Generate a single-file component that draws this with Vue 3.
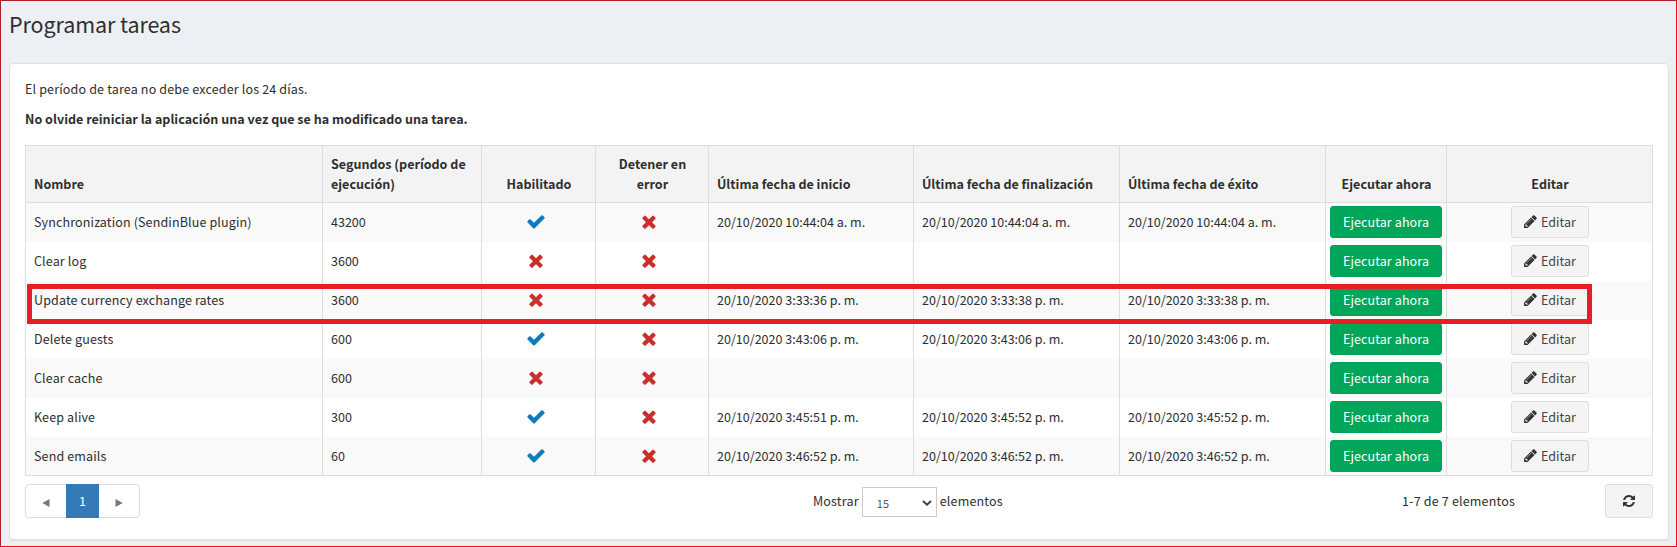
<script setup>
const tasks = [
  { name: 'Synchronization (SendinBlue plugin)', seconds: 43200, enabled: true, start: '20/10/2020 10:44:04 a. m.', end: '20/10/2020 10:44:04 a. m.' },
  { name: 'Clear log', seconds: 3600, enabled: false, start: '', end: '' },
  { name: 'Update currency exchange rates', seconds: 3600, enabled: false, start: '20/10/2020 3:33:36 p. m.', end: '20/10/2020 3:33:38 p. m.' },
  { name: 'Delete guests', seconds: 600, enabled: true, start: '20/10/2020 3:43:06 p. m.', end: '20/10/2020 3:43:06 p. m.' },
  { name: 'Clear cache', seconds: 600, enabled: false, start: '', end: '' },
  { name: 'Keep alive', seconds: 300, enabled: true, start: '20/10/2020 3:45:51 p. m.', end: '20/10/2020 3:45:52 p. m.' },
  { name: 'Send emails', seconds: 60, enabled: true, start: '20/10/2020 3:46:52 p. m.', end: '20/10/2020 3:46:52 p. m.' },
]
const checkPath = 'M1671 566q0 40-28 68l-724 724-136 136q-28 28-68 28t-68-28l-136-136-362-362q-28-28-28-68t28-68l136-136q28-28 68-28t68 28l294 295 656-657q28-28 68-28t68 28l136 136q28 28 28 68z'
const crossPath = 'M1490 1322q0 40-28 68l-136 136q-28 28-68 28t-68-28l-294-294-294 294q-28 28-68 28t-68-28l-136-136q-28-28-28-68t28-68l294-294-294-294q-28-28-28-68t28-68l136-136q28-28 68-28t68 28l294 294 294-294q28-28 68-28t68 28l136 136q28 28 28 68t-28 68l-294 294 294 294q28 28 28 68z'
</script>

<template>
  <div class="page">
    <h1>Programar tareas</h1>
    <section class="card">
      <p class="note">El período de tarea no debe exceder los 24 días.</p>
      <p class="note strong">No olvide reiniciar la aplicación una vez que se ha modificado una tarea.</p>
      <div class="grid">
        <table>
          <colgroup>
            <col class="c-name"><col class="c-sec"><col class="c-on"><col class="c-stop"><col class="c-start"><col class="c-date"><col class="c-date"><col class="c-run"><col class="c-edit">
          </colgroup>
          <thead>
            <tr>
              <th>Nombre</th>
              <th>Segundos (período de ejecución)</th>
              <th class="mid">Habilitado</th>
              <th class="mid">Detener en error</th>
              <th>Última fecha de inicio</th>
              <th>Última fecha de finalización</th>
              <th>Última fecha de éxito</th>
              <th class="mid">Ejecutar ahora</th>
              <th class="mid">Editar</th>
            </tr>
          </thead>
          <tbody>
            <tr v-for="t in tasks" :key="t.name">
              <td class="name">{{ t.name }}</td>
              <td>{{ t.seconds }}</td>
              <td class="mid">
                <svg class="mark" :class="t.enabled ? 'yes' : 'no'" viewBox="0 0 1792 1792"><path :d="t.enabled ? checkPath : crossPath" /></svg>
              </td>
              <td class="mid"><svg class="mark no" viewBox="0 0 1792 1792"><path :d="crossPath" /></svg></td>
              <td>{{ t.start }}</td>
              <td>{{ t.end }}</td>
              <td>{{ t.end }}</td>
              <td class="action"><button class="btn run">Ejecutar ahora</button></td>
              <td class="action">
                <button class="btn edit">
                  <svg class="pencil" viewBox="0 0 1792 1792"><path d="M491 1536l91-91-235-235-91 91v107h128v128h107zm523-928q0-22-22-22-10 0-17 7l-542 542q-7 7-7 17 0 22 22 22 10 0 17-7l542-542q7-7 7-17zm-54-192l416 416-832 832h-416v-416zm683 96q0 53-37 90l-166 166-416-416 166-165q36-38 90-38 53 0 91 38l235 234q37 39 37 91z" /></svg>
                  <span>Editar</span>
                </button>
              </td>
            </tr>
          </tbody>
        </table>
        <div class="highlight"></div>
      </div>
      <footer>
        <div class="pager">
          <span class="step"><svg viewBox="0 0 8 8"><path d="M7.5 0v8L.3 4z" /></svg></span>
          <span class="current">1</span>
          <span class="step"><svg viewBox="0 0 8 8"><path d="M.5 0v8L7.7 4z" /></svg></span>
        </div>
        <div class="length">
          <span>Mostrar</span>
          <div class="select">
            <span>15</span>
            <svg viewBox="0 0 10 6"><path d="M1 1l4 3.7L9 1" /></svg>
          </div>
          <span>elementos</span>
        </div>
        <div class="info">1-7 de 7 elementos</div>
        <button class="btn refresh">
          <svg viewBox="0 0 1792 1792"><path d="M1639 1056q0 5-1 7-64 268-268 434.500t-478 166.500q-146 0-282.500-55t-243.500-157l-129 129q-19 19-45 19t-45-19-19-45v-448q0-26 19-45t45-19h448q26 0 45 19t19 45-19 45l-137 137q71 66 161 102t187 36q134 0 250-65t186-179q11-17 53-117 8-23 30-23h192q13 0 22.500 9.500t9.500 22.500zm25-800v448q0 26-19 45t-45 19h-448q-26 0-45-19t-19-45 19-45l138-138q-148-137-349-137-134 0-250 65t-186 179q-11 17-53 117-8 23-30 23h-199q-13 0-22.500-9.500t-9.500-22.500v-7q65-268 270-434.500t480-166.500q146 0 284 55.500t245 156.500l130-129q19-19 45-19t45 19 19 45z" /></svg>
        </button>
      </footer>
    </section>
  </div>
</template>

<style>
body {
  margin: 0;
}
</style>

<style scoped>
.page {
  box-sizing: border-box;
  width: 1677px;
  height: 547px;
  padding: 0 8px 0 8px;
  border: 1px solid #e80c14;
  border-left-color: #a8222a;
  border-top-color: #a8222a;
  background: #ecf0f5;
  color: #2e2e2e;
  font: 12.54px/20px "Noto Sans CJK SC", "Source Sans Pro", sans-serif;
  overflow: hidden;
}
h1 {
  margin: 9px 0 0;
  font-size: 21.5px;
  font-weight: 400;
  line-height: 28px;
  letter-spacing: -0.1px;
}
.card {
  box-sizing: border-box;
  width: 1660px;
  height: 477px;
  margin-top: 25px;
  padding: 15px 15px 0;
  border: 1px solid #dde2e8;
  border-radius: 4px;
  background: #fff;
  box-shadow: 0 1px 1px rgba(0, 0, 0, 0.06);
}
.note {
  margin: 0 0 10px;
  letter-spacing: 0.15px;
}
.strong {
  margin-bottom: 16px;
  font-weight: 700;
  letter-spacing: 0.01px;
}
.grid {
  position: relative;
}
table {
  width: 1628px;
  table-layout: fixed;
  border-collapse: separate;
  border-spacing: 0;
  border-top: 1px solid #ddd;
  border-right: 1px solid #ddd;
  border-bottom: 1px solid #ddd;
}
.c-name { width: 297px; }
.c-sec { width: 159px; }
.c-on { width: 114px; }
.c-stop { width: 113px; }
.c-start { width: 205px; }
.c-date { width: 206px; }
.c-run { width: 121px; }
.c-edit { width: 206px; }
th,
td {
  box-sizing: border-box;
  padding: 0 8px;
  border-left: 1px solid #ddd;
  text-align: left;
  white-space: nowrap;
}
th {
  height: 57px;
  padding-bottom: 8px;
  border-bottom: 1px solid #ddd;
  background: #f3f3f3;
  font-weight: 700;
  vertical-align: bottom;
  white-space: normal;
}
th.mid {
  padding-left: 9px;
}
td {
  height: 39px;
  padding-bottom: 2px;
  vertical-align: middle;
}
tbody tr:last-child td {
  height: 38px;
  padding-bottom: 1px;
}
td.name {
  letter-spacing: 0.12px;
}
tbody tr:nth-child(odd) td {
  background: #f9f9f9;
}
.mid,
.action {
  text-align: center;
}
td.action {
  padding: 0 4px 1px;
}
tbody tr:last-child td.action {
  padding-bottom: 0;
}
.mark {
  display: block;
  width: 20px;
  height: 20px;
  margin: 0 auto;
  transform: translate(-3px, -0.5px);
}
.yes { fill: #0d7cbf; }
.no { fill: #c9302c; }
.btn {
  box-sizing: border-box;
  display: inline-flex;
  align-items: center;
  justify-content: center;
  height: 32px;
  padding: 0 0 1px;
  border: 1px solid #ddd;
  border-radius: 3px;
  background: #f4f4f4;
  color: #444;
  font: inherit;
  vertical-align: middle;
}
.run {
  width: 112px;
  border-color: #00a157;
  background: #00a65a;
  color: #fff;
  letter-spacing: 0.1px;
}
.edit {
  gap: 4px;
  width: 78px;
}
.pencil {
  width: 15px;
  height: 15px;
  margin-right: -1px;
  fill: #333;
}
.highlight {
  position: absolute;
  top: 139px;
  left: 2px;
  box-sizing: border-box;
  width: 1565px;
  height: 40px;
  border: 5px solid #e81e25;
}
footer {
  display: grid;
  grid-template-columns: 788px 536px 256px 48px;
  align-items: center;
  height: 34px;
  margin-top: 8px;
}
.pager {
  box-sizing: border-box;
  display: flex;
  width: 115px;
  height: 34px;
  border: 1px solid #ddd;
  border-radius: 4px;
}
.pager span {
  display: flex;
  align-items: center;
  justify-content: center;
}
.step {
  flex: 1;
}
.step svg {
  width: 8px;
  height: 8px;
  margin-top: 4px;
  fill: #777;
}
.pager .current {
  width: 33px;
  margin: -1px 0;
  background: #337ab7;
  color: #fff;
}
.length {
  display: flex;
  align-items: center;
  gap: 3px;
  letter-spacing: 0.17px;
}
.select {
  box-sizing: border-box;
  display: flex;
  align-items: center;
  justify-content: space-between;
  width: 75px;
  height: 30px;
  margin-top: 2px;
  padding: 1px 4px 0 14px;
  border: 1px solid #ccc;
  color: #555;
  font-size: 11px;
}
.select svg {
  width: 10px;
  height: 6px;
  fill: none;
  stroke: #444;
  stroke-width: 2;
}
.info {
  padding-left: 53px;
  letter-spacing: 0.17px;
}
.refresh {
  width: 48px;
  height: 34px;
}
.refresh svg {
  width: 14px;
  height: 14px;
  fill: #333;
}
</style>
